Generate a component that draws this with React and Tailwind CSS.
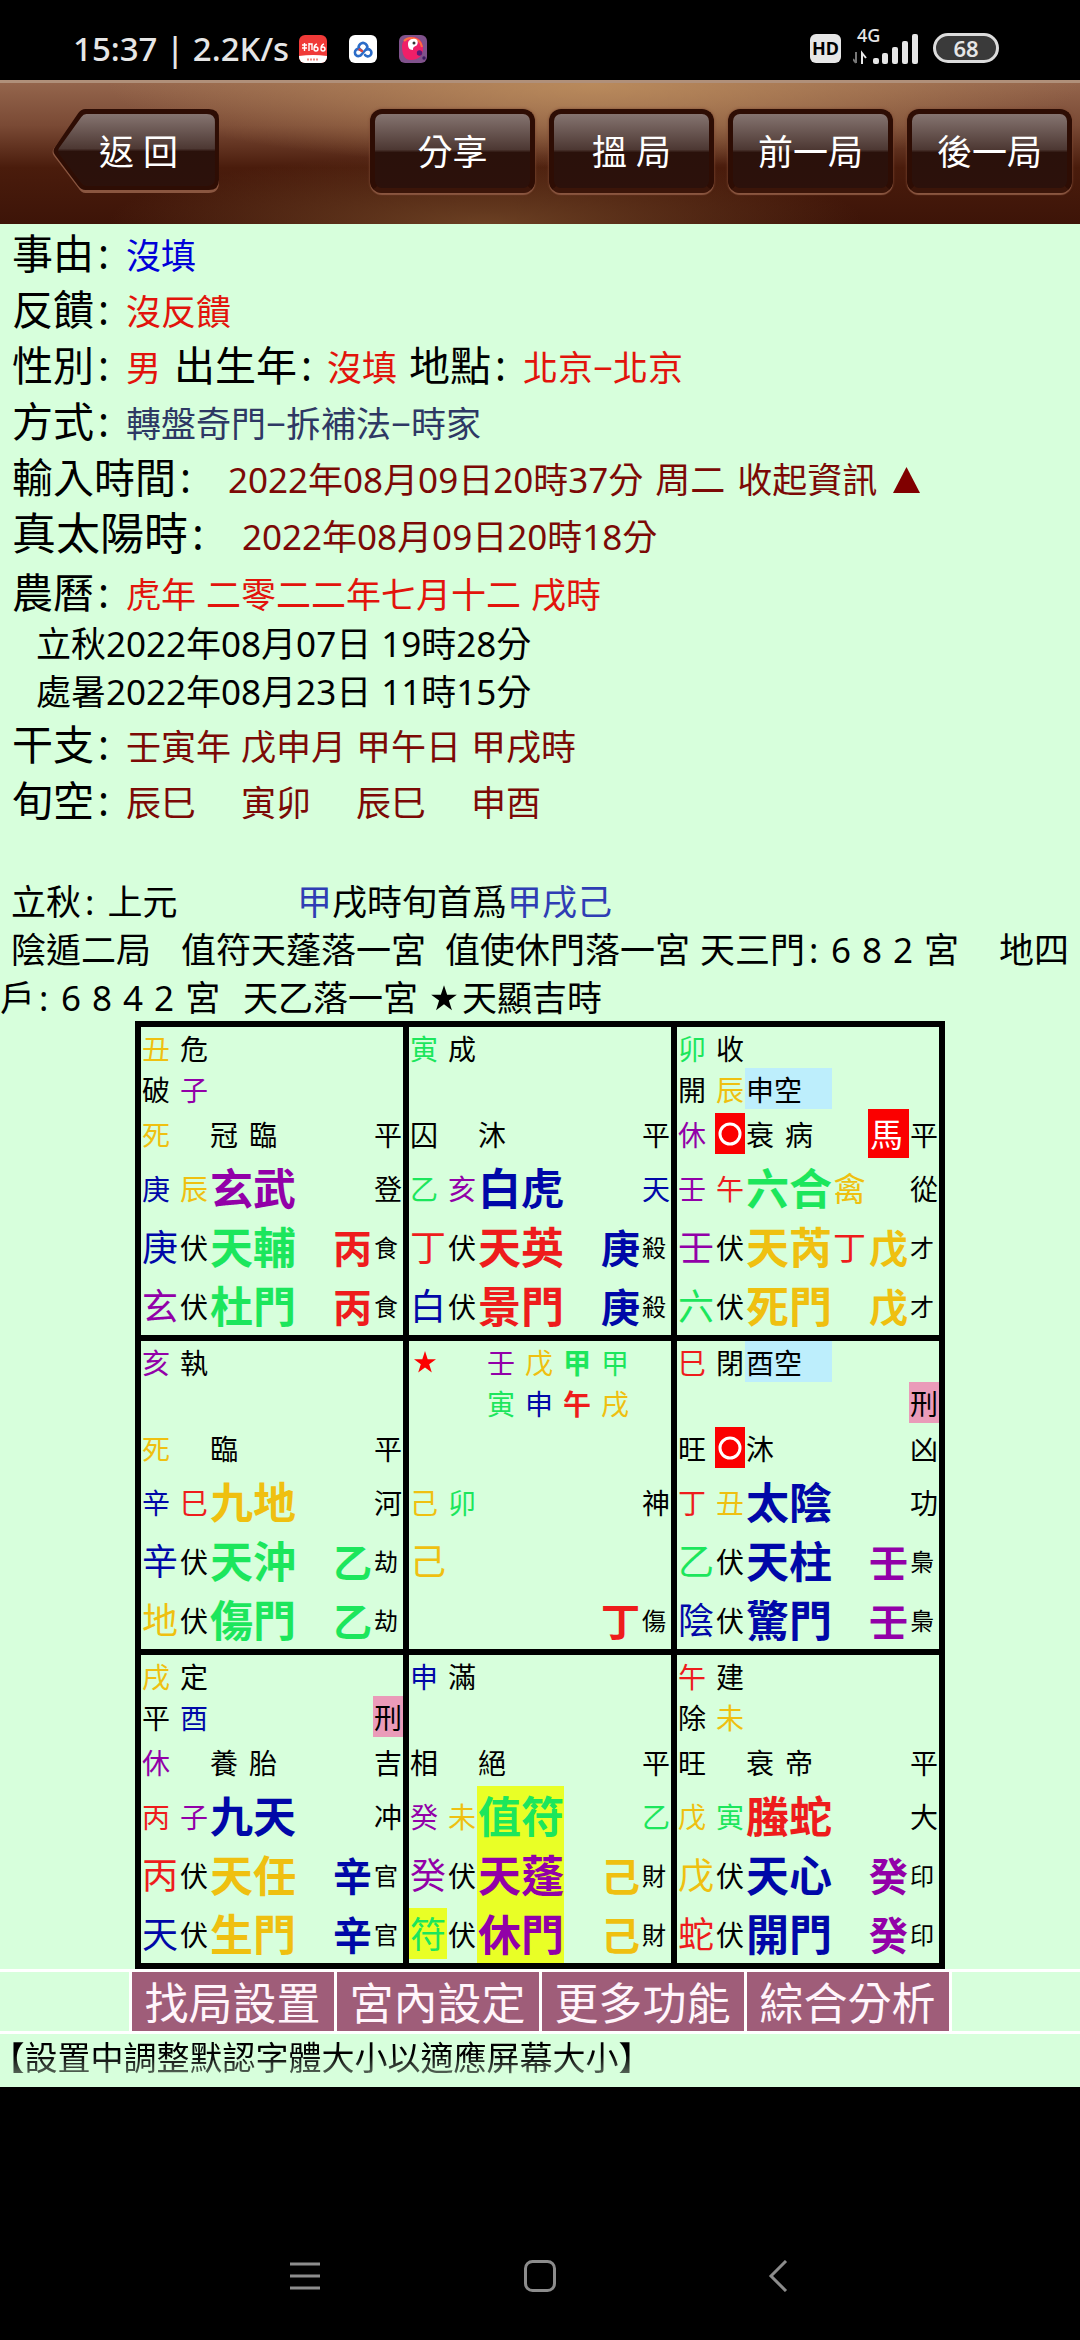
import React from 'react';

const tone = {
  k: 'text-black',
  g: 'text-[#1ce65c]',
  y: 'text-[#efc010]',
  p: 'text-[#9200a8]',
  b: 'text-[#0008a8]',
  r: 'text-[#ee1c1c]',
};

/* Status bar */

function AppBadges() {
  return (
    <div className="flex items-center gap-[22px]">
      <svg className="size-7" viewBox="0 0 28 28" aria-hidden="true">
        <rect width="28" height="28" rx="6" fill="#f03a38" />
        <path d="M0 21Q14 19 28 21V22A6 6 0 0 1 22 28H6A6 6 0 0 1 0 22Z" fill="#fff" />
        <path d="M3 10h5M5.500 8v8M3 13h5M10 8v8M10 9h3v6M18 9q-3 1-3 5q0 2 2 2t2-2-2-2-2 1M25 9q-3 1-3 5q0 2 2 2t2-2-2-2-2 1" fill="none" stroke="#fff" strokeWidth="1.400" />
        <path d="M8 24.500h12" stroke="#f08a80" strokeWidth="2" strokeDasharray="2 1" />
      </svg>
      <svg className="size-7" viewBox="0 0 28 28" aria-hidden="true">
        <rect width="28" height="28" rx="6" fill="#fff" />
        <g fill="none" stroke="#2b6cc8" strokeWidth="2.600" strokeLinecap="round">
          <path d="M10.500 14.500A4.200 4.200 0 1 1 17.500 14.500" />
          <path d="M12.500 15.500A3.600 3.600 0 1 0 12.500 19.500L16 15.500A3.600 3.600 0 1 1 16 20" />
        </g>
        <path d="M10.500 14.500L13 16" stroke="#e0453c" strokeWidth="2.400" strokeLinecap="round" />
      </svg>
      <svg className="size-7" viewBox="0 0 28 28" aria-hidden="true">
        <rect width="28" height="28" rx="6" fill="#80528c" />
        <path d="M3 11C3 5 9 2 15 2c6 1 9 6 9 11 0 8-5 12-12 12S3 19 3 11Z" fill="#f01f68" />
        <path d="M5 6C10 1 21 2 23 12" stroke="#ff7040" strokeWidth="2" fill="none" />
        <path d="M14 4c4-1 6 3 4 6-2 2-4 1-4 5-4 0-5-3-5-6s2-5 5-5Z" fill="#fff" />
        <circle cx="15" cy="8" r="1.500" fill="#333" />
        <circle cx="20.500" cy="18" r="2.700" fill="#5a1878" />
        <circle cx="25" cy="23" r="1.700" fill="#3a1a60" />
      </svg>
    </div>
  );
}

function StatusBar() {
  return (
    <div className="flex h-20 items-start justify-between bg-black pt-[33px] pr-[81px] pl-[73px] text-[#e6e6e6]">
      <div className="flex h-8 items-center gap-[10px]">
        <span className="text-[33px] leading-8 font-medium whitespace-nowrap">15:37 | 2.2K/s</span>
        <AppBadges />
      </div>
      <div className="flex h-[30px] items-center gap-3">
        <span className="flex h-[29px] w-[31px] items-center justify-center rounded-md bg-[#e6e6e6] text-[18px] leading-none font-bold text-black">
          HD
        </span>
        <div className="relative h-[34px] w-[68px]">
          <span className="absolute -top-1 left-1 text-[18px] leading-4 font-medium">4G</span>
          <svg className="h-[34px] w-[68px]" viewBox="0 0 68 34" aria-hidden="true">
            <g fill="#e6e6e6">
              <rect x="20" y="27" width="6" height="6" rx="2" />
              <rect x="29" y="22" width="6" height="11" rx="2" />
              <rect x="39" y="16" width="6" height="17" rx="2" />
              <rect x="49" y="10" width="6" height="23" rx="2" />
              <rect x="59" y="3" width="6" height="30" rx="2" />
            </g>
            <path d="M3 21v11M3 32l-3-4" stroke="#777" strokeWidth="2" fill="none" />
            <path d="M9 33V22l4 5" stroke="#e6e6e6" strokeWidth="2" fill="none" />
          </svg>
        </div>
        <span className="flex h-[30px] w-[66px] items-center justify-center rounded-full border-[3px] border-[#dcdcdc] bg-[#3a3a3a] text-[22px] leading-none font-semibold">
          68
        </span>
      </div>
    </div>
  );
}

/* Toolbar */

function ToolButton({ children }) {
  return (
    <button
      type="button"
      className="h-[84px] w-[165px] rounded-xl border-[5px] border-[#2e0d04] border-b-[#3b1509] bg-[linear-gradient(#857470_0%,#4d3833_48%,#2a110b_52%,#2c110b_100%)] text-[35px] leading-none whitespace-nowrap text-white shadow-[0_2px_1px_#8a5640,0_0_3px_#7d4a34]"
    >
      {children}
    </button>
  );
}

function BackButton() {
  return (
    <button type="button" className="relative h-[86px] w-[170px] text-[35px] leading-none whitespace-nowrap text-white">
      <svg className="absolute inset-0 size-full" viewBox="0 0 168 86" preserveAspectRatio="none" aria-hidden="true">
        <defs>
          <linearGradient id="backFill" x1="0" y1="0" x2="0" y2="1">
            <stop offset="0" stopColor="#857470" />
            <stop offset="0.480" stopColor="#4d3833" />
            <stop offset="0.520" stopColor="#2a110b" />
            <stop offset="1" stopColor="#2c110b" />
          </linearGradient>
        </defs>
        <path d="M34 4H156Q166 4 166 14V74Q166 85 156 85H34Q30 85 27 80L3 48Q0 44 3 40L27 8Q30 4 34 4Z" fill="#8a5640" />
        <path d="M34 1H156Q166 1 166 11V72Q166 82 156 82H34Q30 82 27 78L4 47Q1 43 4 39L27 5Q30 1 34 1Z" fill="#2e0d04" />
        <path d="M35 6H154Q162 6 162 14V71Q162 78 154 78H35Q32 78 30 75L8 46Q6 43 8 40L30 9Q32 6 35 6Z" fill="url(#backFill)" />
      </svg>
      <span className="relative pl-[5px]">返 回</span>
    </button>
  );
}

function Toolbar() {
  return (
    <header className="flex h-36 items-center justify-between border-t-[3px] border-[#b0907a] bg-[radial-gradient(ellipse_45%_60%_at_55%_0%,#b98a5c_0%,#b98a5c00_100%),radial-gradient(ellipse_35%_50%_at_45%_100%,#6b4023_0%,#6b402300_100%),linear-gradient(#94654c_0%,#7a4a35_30%,#4a1c0c_60%,#3d1408_100%)] pr-2 pb-[5px] pl-[51px]">
      <BackButton />
      <div className="flex gap-[14px]">
        <ToolButton>分享</ToolButton>
        <ToolButton>搵 局</ToolButton>
        <ToolButton>前一局</ToolButton>
        <ToolButton>後一局</ToolButton>
      </div>
    </header>
  );
}

/* Chart details */

function Row({ children, className = 'h-14' }) {
  return <div className={`flex items-baseline pl-3 leading-[56px] ${className}`}>{children}</div>;
}

function Label({ children, className = 'w-[114px]' }) {
  return (
    <span className={`shrink-0 text-[41px] ${className}`}>
      {children}
      <span className="ml-1">:</span>
    </span>
  );
}

function Details() {
  return (
    <section className="pt-px text-[35px] whitespace-nowrap">
      <Row>
        <Label>事由</Label>
        <span className="text-[#0000d8]">沒填</span>
      </Row>
      <Row>
        <Label>反饋</Label>
        <span className="text-[#e2140c]">沒反饋</span>
      </Row>
      <Row>
        <Label>性別</Label>
        <span className="w-12 text-[#e2140c]">男</span>
        <Label className="w-[153px]">出生年</Label>
        <span className="w-[82px] text-[#e2140c]">沒填</span>
        <Label>地點</Label>
        <span className="text-[#e2140c]">北京−北京</span>
      </Row>
      <Row>
        <Label>方式</Label>
        <span className="text-[#2e3864]">轉盤奇門−拆補法−時家</span>
      </Row>
      <Row>
        <Label className="w-[216px]">輸入時間</Label>
        <span className="flex gap-3 text-[#7c0a06]">
          <span>2022年08月09日20時37分</span>
          <span>周二</span>
          <button type="button" className="flex items-center gap-4">
            收起資訊
            <svg className="h-[26px] w-[27px]" viewBox="0 0 27 26" aria-hidden="true">
              <path d="M13.500 0L27 26H0Z" fill="#800000" />
            </svg>
          </button>
        </span>
      </Row>
      <Row className="h-[59px]">
        <span className="w-[230px] shrink-0 text-[44px]">
          真太陽時<span className="ml-1">:</span>
        </span>
        <span className="text-[#7c0a06]">2022年08月09日20時18分</span>
      </Row>
      <Row>
        <Label>農曆</Label>
        <span className="flex gap-[10px] text-[#e2140c]">
          <span>虎年</span>
          <span>二零二二年七月十二</span>
          <span>戌時</span>
        </span>
      </Row>
      <div className="flex gap-[10px] pl-9 leading-[48px]">
        <span>立秋2022年08月07日</span>
        <span>19時28分</span>
      </div>
      <div className="flex gap-[10px] pl-9 leading-[48px]">
        <span>處暑2022年08月23日</span>
        <span>11時15分</span>
      </div>
      <Row>
        <Label>干支</Label>
        <span className="grid grid-cols-[repeat(4,115px)] text-[#7c0a06]">
          <span>壬寅年</span>
          <span>戊申月</span>
          <span>甲午日</span>
          <span>甲戌時</span>
        </span>
      </Row>
      <Row>
        <Label>旬空</Label>
        <span className="grid grid-cols-[repeat(4,115px)] text-[#7c0a06]">
          <span>辰巳</span>
          <span>寅卯</span>
          <span>辰巳</span>
          <span>申酉</span>
        </span>
      </Row>
      <div className="mt-[50px] flex pl-[11px] leading-[48px]">
        <span className="w-[286px]">
          立秋<span className="mx-1">:</span> 上元
        </span>
        <span>
          <span className="text-[#2f3db4]">甲</span>戌時旬首爲<span className="text-[#2f3db4]">甲戌己</span>
        </span>
      </div>
      <div className="flex pl-[11px] leading-[48px]">
        <span className="w-[170px]">陰遁二局</span>
        <span className="w-[264px]">值符天蓬落一宮</span>
        <span className="w-[255px]">值使休門落一宮</span>
        <span className="w-[131px]">
          天三門<span className="ml-1">:</span>
        </span>
        <span className="flex w-[168px] gap-[11px]">
          <span>6</span>
          <span>8</span>
          <span>2</span>
          <span>宮</span>
        </span>
        <span>地四</span>
      </div>
      <div className="flex leading-[47px]">
        <span className="w-[61px]">
          戶<span className="ml-1">:</span>
        </span>
        <span className="flex w-[182px] gap-[11px]">
          <span>6</span>
          <span>8</span>
          <span>4</span>
          <span>2</span>
          <span>宮</span>
        </span>
        <span className="w-[187px]">天乙落一宮</span>
        <span className="flex items-center">
          <svg className="mr-1 size-7" viewBox="0 0 24 24" aria-hidden="true">
            <path d="M12 1l2.700 8.200H23l-6.800 5 2.600 8.300L12 17.400l-6.800 5.100 2.600-8.300-6.800-5h8.300Z" />
          </svg>
          天顯吉時
        </span>
      </div>
    </section>
  );
}

/* Nine palaces. Each glyph is written as [tone, text]. */

function Glyph({ of, className = '' }) {
  if (!of) return <span />;
  return <span className={`pt-[3px] pl-px ${tone[of[0]]} ${className}`}>{of[1]}</span>;
}

function Palace({ top, second, voidTop, voidSecond, penalty, season, hollow, stages, horse, luck, god, star, gate, lit }) {
  const glow = lit ? 'bg-[#e9ff26]' : '';
  return (
    <div className="grid grid-cols-[38px_30px_87px_36px_41px_30px] grid-rows-[41px_41px_49px_59px_59px_59px] items-center text-[28px] leading-[38px] whitespace-nowrap">
      <Glyph of={top[0]} />
      <Glyph of={top[1]} />
      {voidTop ? <span className="bg-[#bdeefc] pt-[3px] pl-px">{voidTop}</span> : <span />}
      <span />
      <span />
      <span />

      <Glyph of={second?.[0]} />
      <Glyph of={second?.[1]} />
      {voidSecond ? <span className="bg-[#bdeefc] pt-[3px] pl-px">{voidSecond}</span> : <span />}
      <span />
      <span />
      {penalty ? <span className="bg-[#ea9bb9] pt-[3px] pl-px">{penalty}</span> : <span />}

      <Glyph of={season} />
      {hollow ? (
        <span className="flex h-[41px] items-center justify-center bg-[#fb0000]">
          <svg className="size-6" viewBox="0 0 24 24" aria-label="O">
            <circle cx="12" cy="12" r="10" fill="none" stroke="#fff" strokeWidth="3" />
          </svg>
        </span>
      ) : (
        <span />
      )}
      <span className="flex gap-[11px] pt-[3px] pl-px">
        {stages.map((s) => (
          <span key={s}>{s}</span>
        ))}
      </span>
      <span />
      {horse ? (
        <span className="bg-[#fb0000] pt-[3px] pl-[2px] text-[33px] leading-[46px] text-white">{horse}</span>
      ) : (
        <span />
      )}
      <Glyph of={['k', luck]} />

      <Glyph of={god[0]} />
      <Glyph of={god[1]} />
      <Glyph of={god[2]} className={`text-[43px] leading-[56px] font-bold ${glow}`} />
      <Glyph of={god[3]} className="text-[33px]" />
      <span />
      <Glyph of={god[4]} />

      {[star, gate].map((line, i) => (
        <React.Fragment key={i}>
          <Glyph of={line[0]} className={`text-[36px] leading-[48px] ${lit && i === 1 ? glow : ''}`} />
          <Glyph of={['k', '伏']} />
          <Glyph of={line[1]} className={`text-[43px] leading-[56px] font-bold ${glow}`} />
          <Glyph of={line[2]} className="text-[33px]" />
          <Glyph of={line[3]} className="text-[39px] font-bold" />
          <Glyph of={line[4]} className="text-[24px]" />
        </React.Fragment>
      ))}
    </div>
  );
}

function CentrePalace() {
  const pillars = [
    [['p', '壬'], ['y', '戊'], ['g', '甲'], ['g', '甲']],
    [['g', '寅'], ['b', '申'], ['r', '午'], ['y', '戌']],
  ];
  return (
    <div className="grid grid-cols-[38px_30px_87px_36px_41px_30px] grid-rows-[41px_41px_49px_59px_59px_59px] items-center text-[28px] leading-[38px] whitespace-nowrap">
      <svg className="ml-1 size-6" viewBox="0 0 24 24" aria-label="★">
        <path d="M12 1l2.700 8.200H23l-6.800 5 2.600 8.300L12 17.400l-6.800 5.100 2.600-8.300-6.800-5h8.300Z" fill="#fb0000" />
      </svg>
      {pillars.map((line, i) => (
        <span key={i} className="col-span-4 col-start-3 flex gap-[9px] pl-[9px]">
          {line.map((g, j) => (
            <Glyph key={j} of={g} className={j === 2 ? 'font-bold' : ''} />
          ))}
        </span>
      ))}
      <Glyph of={['y', '己']} className="row-start-4" />
      <Glyph of={['g', '卯']} className="row-start-4" />
      <Glyph of={['k', '神']} className="col-start-6 row-start-4" />
      <Glyph of={['y', '己']} className="row-start-5 text-[36px]" />
      <Glyph of={['r', '丁']} className="col-start-5 row-start-6 text-[39px] font-bold" />
      <Glyph of={['k', '傷']} className="col-start-6 row-start-6 text-[24px]" />
    </div>
  );
}

const palaces = [
  [
    {
      top: [['y', '丑'], ['k', '危']], second: [['k', '破'], ['p', '子']],
      season: ['y', '死'], stages: ['冠', '臨'], luck: '平',
      god: [['b', '庚'], ['y', '辰'], ['p', '玄武'], null, ['k', '登']],
      star: [['b', '庚'], ['g', '天輔'], null, ['r', '丙'], ['k', '食']],
      gate: [['p', '玄'], ['g', '杜門'], null, ['r', '丙'], ['k', '食']],
    },
    {
      top: [['g', '寅'], ['k', '成']],
      season: ['k', '囚'], stages: ['沐'], luck: '平',
      god: [['g', '乙'], ['p', '亥'], ['b', '白虎'], null, ['b', '天']],
      star: [['r', '丁'], ['r', '天英'], null, ['b', '庚'], ['k', '殺']],
      gate: [['b', '白'], ['r', '景門'], null, ['b', '庚'], ['k', '殺']],
    },
    {
      top: [['g', '卯'], ['k', '收']], second: [['k', '開'], ['y', '辰']], voidSecond: '申空',
      season: ['p', '休'], hollow: true, stages: ['衰', '病'], horse: '馬', luck: '平',
      god: [['p', '壬'], ['r', '午'], ['g', '六合'], ['y', '禽'], ['k', '從']],
      star: [['p', '壬'], ['y', '天芮'], ['r', '丁'], ['y', '戊'], ['k', '才']],
      gate: [['g', '六'], ['y', '死門'], null, ['y', '戊'], ['k', '才']],
    },
  ],
  [
    {
      top: [['p', '亥'], ['k', '執']],
      season: ['y', '死'], stages: ['臨'], luck: '平',
      god: [['b', '辛'], ['r', '巳'], ['y', '九地'], null, ['k', '河']],
      star: [['b', '辛'], ['g', '天沖'], null, ['g', '乙'], ['k', '劫']],
      gate: [['y', '地'], ['g', '傷門'], null, ['g', '乙'], ['k', '劫']],
    },
    null,
    {
      top: [['r', '巳'], ['k', '閉']], voidTop: '酉空', penalty: '刑',
      season: ['k', '旺'], hollow: true, stages: ['沐'], luck: '凶',
      god: [['r', '丁'], ['y', '丑'], ['b', '太陰'], null, ['k', '功']],
      star: [['g', '乙'], ['b', '天柱'], null, ['p', '壬'], ['k', '梟']],
      gate: [['b', '陰'], ['b', '驚門'], null, ['p', '壬'], ['k', '梟']],
    },
  ],
  [
    {
      top: [['y', '戌'], ['k', '定']], second: [['k', '平'], ['b', '酉']], penalty: '刑',
      season: ['p', '休'], stages: ['養', '胎'], luck: '吉',
      god: [['r', '丙'], ['p', '子'], ['b', '九天'], null, ['k', '冲']],
      star: [['r', '丙'], ['y', '天任'], null, ['b', '辛'], ['k', '官']],
      gate: [['b', '天'], ['y', '生門'], null, ['b', '辛'], ['k', '官']],
    },
    {
      top: [['b', '申'], ['k', '滿']],
      season: ['k', '相'], stages: ['絕'], luck: '平', lit: true,
      god: [['p', '癸'], ['y', '未'], ['g', '值符'], null, ['g', '乙']],
      star: [['p', '癸'], ['p', '天蓬'], null, ['y', '己'], ['k', '財']],
      gate: [['g', '符'], ['p', '休門'], null, ['y', '己'], ['k', '財']],
    },
    {
      top: [['r', '午'], ['k', '建']], second: [['k', '除'], ['y', '未']],
      season: ['k', '旺'], stages: ['衰', '帝'], luck: '平',
      god: [['y', '戊'], ['g', '寅'], ['r', '螣蛇'], null, ['k', '大']],
      star: [['y', '戊'], ['b', '天心'], null, ['p', '癸'], ['k', '印']],
      gate: [['r', '蛇'], ['b', '開門'], null, ['p', '癸'], ['k', '印']],
    },
  ],
];

function Board() {
  return (
    <table className="mx-auto border-separate border-spacing-[6px] bg-black">
      <tbody>
        {palaces.map((line, i) => (
          <tr key={i}>
            {line.map((p, j) => (
              <td key={j} className="bg-[#d7ffdc] p-0">
                {p ? <Palace {...p} /> : <CentrePalace />}
              </td>
            ))}
          </tr>
        ))}
      </tbody>
    </table>
  );
}

/* Actions under the board */

function Actions() {
  return (
    <div className="flex gap-[3px] bg-white py-[3px]">
      <div className="flex-1 bg-[#d7ffdc]" />
      {['找局設置', '宮內設定', '更多功能', '綜合分析'].map((t) => (
        <button key={t} type="button" className="h-[59px] w-[202px] bg-[#9f5d79] pt-[3px] text-[44px] leading-[56px] whitespace-nowrap text-[#fff5fb]">
          {t}
        </button>
      ))}
      <div className="flex-1 bg-[#d7ffdc]" />
    </div>
  );
}

function SystemNav() {
  return (
    <nav className="flex h-[253px] items-center justify-around bg-black px-[187px] pt-[124px] text-[#8c8c8c]">
      <button type="button" aria-label="Recent apps" className="p-2">
        <svg className="size-8" viewBox="0 0 32 32" fill="none" stroke="currentColor" strokeWidth="3">
          <path d="M1 4H31M1 16H31M1 28H31" />
        </svg>
      </button>
      <button type="button" aria-label="Home" className="p-2">
        <svg className="size-8" viewBox="0 0 32 32" fill="none" stroke="currentColor" strokeWidth="3">
          <rect x="1.500" y="1.500" width="29" height="29" rx="7" />
        </svg>
      </button>
      <button type="button" aria-label="Back" className="p-2">
        <svg className="size-8" viewBox="0 0 32 32" fill="none" stroke="currentColor" strokeWidth="3">
          <path d="M27 1L12 16L27 31" />
        </svg>
      </button>
    </nav>
  );
}

export default function App() {
  return (
    <div className="min-h-screen overflow-x-hidden bg-black font-['Noto_Sans','Noto_Sans_CJK_SC',sans-serif] text-black" lang="zh-Hant">
      <StatusBar />
      <Toolbar />
      <main className="bg-[#d7ffdc]">
        <Details />
        <Board />
        <Actions />
        <p className="h-[53px] [mask-image:linear-gradient(#000_40%,#0009_75%)] pl-2 text-[33px] leading-[48px] whitespace-nowrap [text-spacing-trim:trim-start]">
          【設置中調整默認字體大小以適應屏幕大小】
        </p>
      </main>
      <SystemNav />
    </div>
  );
}
